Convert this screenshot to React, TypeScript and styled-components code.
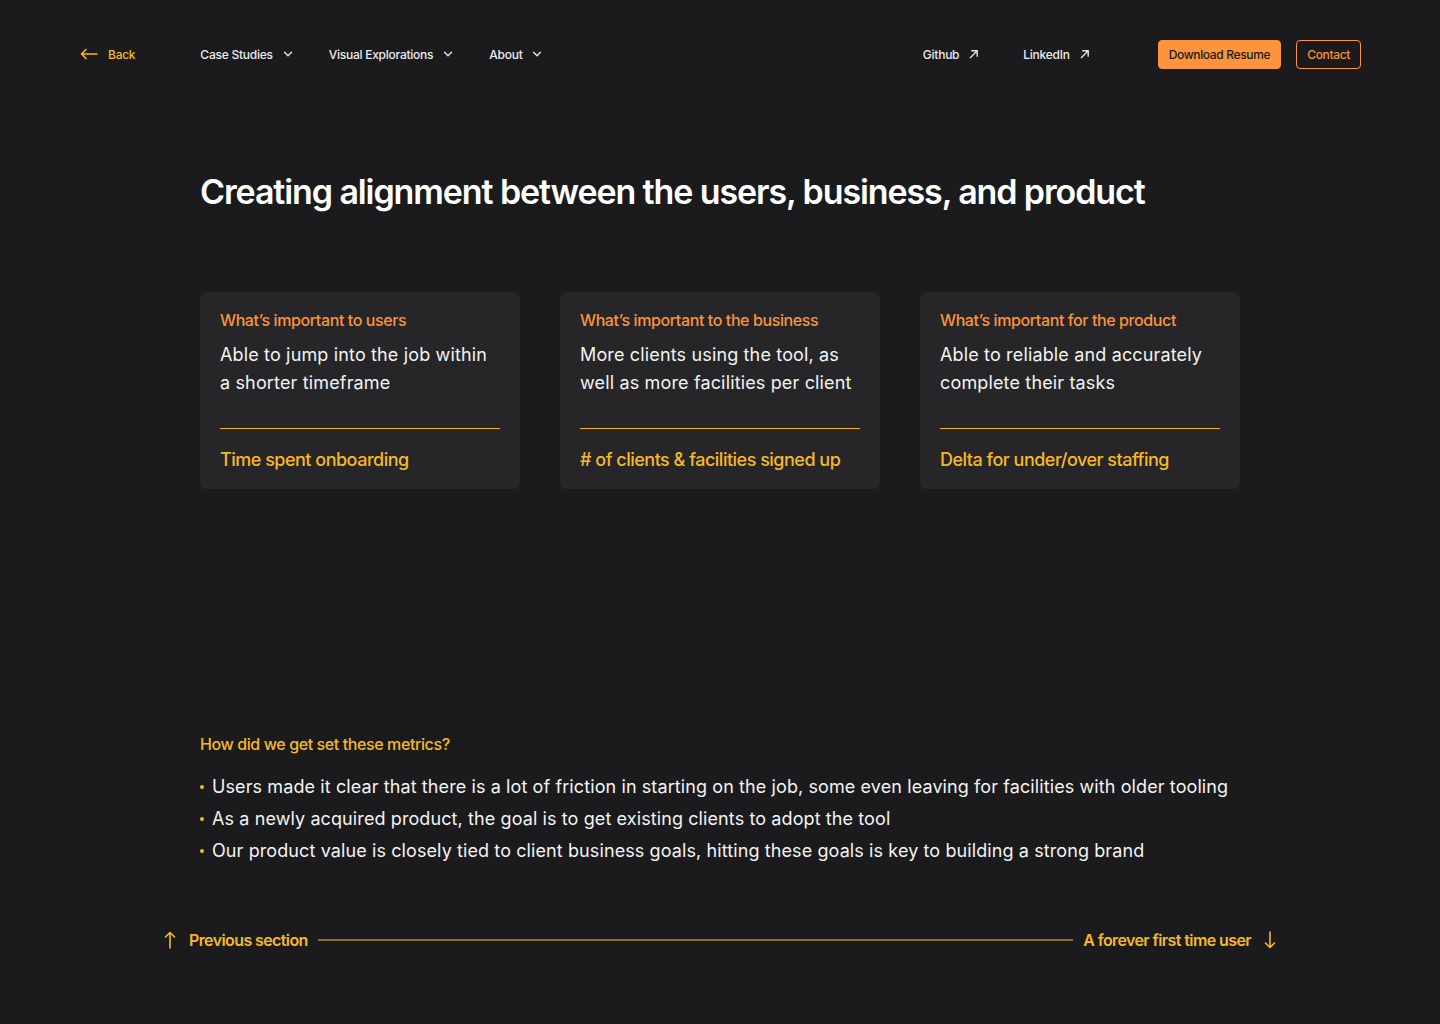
import React from "react";
import styled, { createGlobalStyle } from "styled-components";

const Global = createGlobalStyle`
  html, body { margin: 0; padding: 0; background: #1b1b1d; }
  body { font-family: Inter, "Noto Sans", sans-serif; color: #f2f2f2; -webkit-font-smoothing: antialiased; }
  * { box-sizing: border-box; }
`;

const ORANGE = "#fd933a";
const YELLOW = "#f7b923";

const Page = styled.div`
  min-height: 1024px;
  display: flex;
  flex-direction: column;
`;

const Nav = styled.nav`
  height: 108px;
  display: flex;
  align-items: center;
  padding: 0 79px 0 80px;
`;

const NavGroup = styled.div<{ $gap: number; $ml?: number }>`
  display: flex;
  align-items: center;
  gap: ${(p) => p.$gap}px;
  margin-left: ${(p) => p.$ml ?? 0}px;
`;

const NavLink = styled.a<{ $accent?: boolean }>`
  display: flex;
  align-items: center;
  gap: 10px;
  font-size: 12px;
  font-weight: 500;
  color: ${(p) => (p.$accent ? YELLOW : "#ececec")};
  text-decoration: none;
  letter-spacing: -0.25px;
`;

const Spacer = styled.div`
  flex: 1;
`;

const Button = styled.a<{ $solid?: boolean }>`
  height: 29px;
  display: flex;
  align-items: center;
  padding: 0 10px;
  border-radius: 4px;
  font-size: 12px;
  font-weight: 500;
  letter-spacing: -0.35px;
  text-decoration: none;
  border: 1px solid ${ORANGE};
  background: ${(p) => (p.$solid ? ORANGE : "transparent")};
  color: ${(p) => (p.$solid ? "#1b1b1d" : ORANGE)};
`;

const Main = styled.main`
  width: 1040px;
  margin: 0 auto;
  display: flex;
  flex-direction: column;
`;

const Title = styled.h1`
  margin: 62px 0 0;
  font-size: 34px;
  line-height: 44px;
  font-weight: 600;
  letter-spacing: -1.1px;
  color: #ffffff;
`;

const Cards = styled.div`
  margin-top: 78px;
  display: grid;
  grid-template-columns: repeat(3, 320px);
  gap: 40px;
`;

const Card = styled.div`
  background: #262628;
  border-radius: 6px;
  padding: 17px 20px 17px;
  display: flex;
  flex-direction: column;
  height: 197px;
`;

const CardLabel = styled.div`
  font-size: 16px;
  line-height: 22px;
  font-weight: 500;
  color: ${ORANGE};
  letter-spacing: -0.4px;
`;

const CardBody = styled.p`
  margin: 10px 0 0;
  font-size: 18px;
  line-height: 28px;
  font-weight: 400;
  color: #f3f3f3;
  letter-spacing: 0.15px;
  flex: 1;
`;

const Divider = styled.div`
  height: 1px;
  background: ${YELLOW};
  margin-bottom: 19px;
`;

const Metric = styled.div`
  font-size: 18px;
  line-height: 24px;
  font-weight: 500;
  color: ${YELLOW};
  letter-spacing: -0.5px;
`;

const Section = styled.section`
  margin-top: 244px;
`;

const SectionLabel = styled.div`
  font-size: 16px;
  line-height: 22px;
  font-weight: 500;
  color: ${YELLOW};
  letter-spacing: -0.4px;
`;

const List = styled.ul`
  margin: 16px 0 0;
  padding: 0;
  list-style: none;
`;

const Item = styled.li`
  position: relative;
  padding-left: 12px;
  font-size: 18px;
  line-height: 32px;
  color: #f3f3f3;
  letter-spacing: 0.1px;
  &::before {
    content: "";
    position: absolute;
    left: 0;
    top: 14px;
    width: 4px;
    height: 4px;
    border-radius: 50%;
    background: ${YELLOW};
  }
`;

const Pager = styled.div`
  width: 1112px;
  margin: 63px auto 0;
  display: flex;
  align-items: center;
  gap: 10px;
`;

const PagerLink = styled.a`
  display: flex;
  align-items: center;
  gap: 13px;
  font-size: 16px;
  font-weight: 600;
  color: ${YELLOW};
  text-decoration: none;
  letter-spacing: -0.6px;
  white-space: nowrap;
`;

const PagerLine = styled.div`
  flex: 1;
  height: 2px;
  background: #8c6f1f;
`;

const Chevron = () => (
  <svg width="10" height="10" viewBox="0 0 10 10" fill="none">
    <path d="M1.5 3.3 L5 6.8 L8.5 3.3" stroke="#e5e5e5" strokeWidth="1.4" strokeLinecap="round" strokeLinejoin="round" />
  </svg>
);

const ArrowUR = () => (
  <svg width="10" height="10" viewBox="0 0 10 10" fill="none">
    <path d="M1.5 8.5 L8 2 M3 1.8 H8.2 V7" stroke="#e5e5e5" strokeWidth="1.4" strokeLinecap="square" />
  </svg>
);

const ArrowLeft = () => (
  <svg width="18" height="12" viewBox="0 0 18 12" fill="none">
    <path d="M17 6 H2 M6 1.5 L1.5 6 L6 10.5" stroke={YELLOW} strokeWidth="1.6" strokeLinecap="round" strokeLinejoin="round" />
  </svg>
);

const ArrowV = ({ down }: { down?: boolean }) => (
  <svg width="12" height="18" viewBox="0 0 12 18" fill="none" style={down ? { transform: "rotate(180deg)" } : undefined}>
    <path d="M6 17 V2 M1.5 6 L6 1.5 L10.5 6" stroke={YELLOW} strokeWidth="1.6" strokeLinecap="round" strokeLinejoin="round" />
  </svg>
);

const cards = [
  {
    label: "What’s important to users",
    body: "Able to jump into the job within a shorter timeframe",
    metric: "Time spent onboarding",
  },
  {
    label: "What’s important to the business",
    body: "More clients using the tool, as well as more facilities per client",
    metric: "# of clients & facilities signed up",
  },
  {
    label: "What’s important for the product",
    body: "Able to reliable and accurately complete their tasks",
    metric: "Delta for under/over staffing",
  },
];

const bullets = [
  "Users made it clear that there is a lot of friction in starting on the job, some even leaving for facilities with older tooling",
  "As a newly acquired product, the goal is to get existing clients to adopt the tool",
  "Our product value is closely tied to client business goals, hitting these goals is key to building a strong brand",
];

export default function App() {
  return (
    <Page>
      <Global />
      <Nav>
        <NavLink $accent href="#">
          <ArrowLeft />
          Back
        </NavLink>
        <NavGroup $gap={36} $ml={65}>
          <NavLink href="#">Case Studies <Chevron /></NavLink>
          <NavLink href="#">Visual Explorations <Chevron /></NavLink>
          <NavLink href="#">About <Chevron /></NavLink>
        </NavGroup>
        <Spacer />
        <NavGroup $gap={44}>
          <NavLink href="#">Github <ArrowUR /></NavLink>
          <NavLink href="#">LinkedIn <ArrowUR /></NavLink>
        </NavGroup>
        <NavGroup $gap={15} $ml={68}>
          <Button $solid href="#">Download Resume</Button>
          <Button href="#">Contact</Button>
        </NavGroup>
      </Nav>
      <Main>
        <Title>Creating alignment between the users, business, and product</Title>
        <Cards>
          {cards.map((c) => (
            <Card key={c.label}>
              <CardLabel>{c.label}</CardLabel>
              <CardBody>{c.body}</CardBody>
              <Divider />
              <Metric>{c.metric}</Metric>
            </Card>
          ))}
        </Cards>
        <Section>
          <SectionLabel>How did we get set these metrics?</SectionLabel>
          <List>
            {bullets.map((b) => (
              <Item key={b}>{b}</Item>
            ))}
          </List>
        </Section>
      </Main>
      <Pager>
        <PagerLink href="#">
          <ArrowV />
          Previous section
        </PagerLink>
        <PagerLine />
        <PagerLink href="#">
          A forever first time user
          <ArrowV down />
        </PagerLink>
      </Pager>
    </Page>
  );
}
